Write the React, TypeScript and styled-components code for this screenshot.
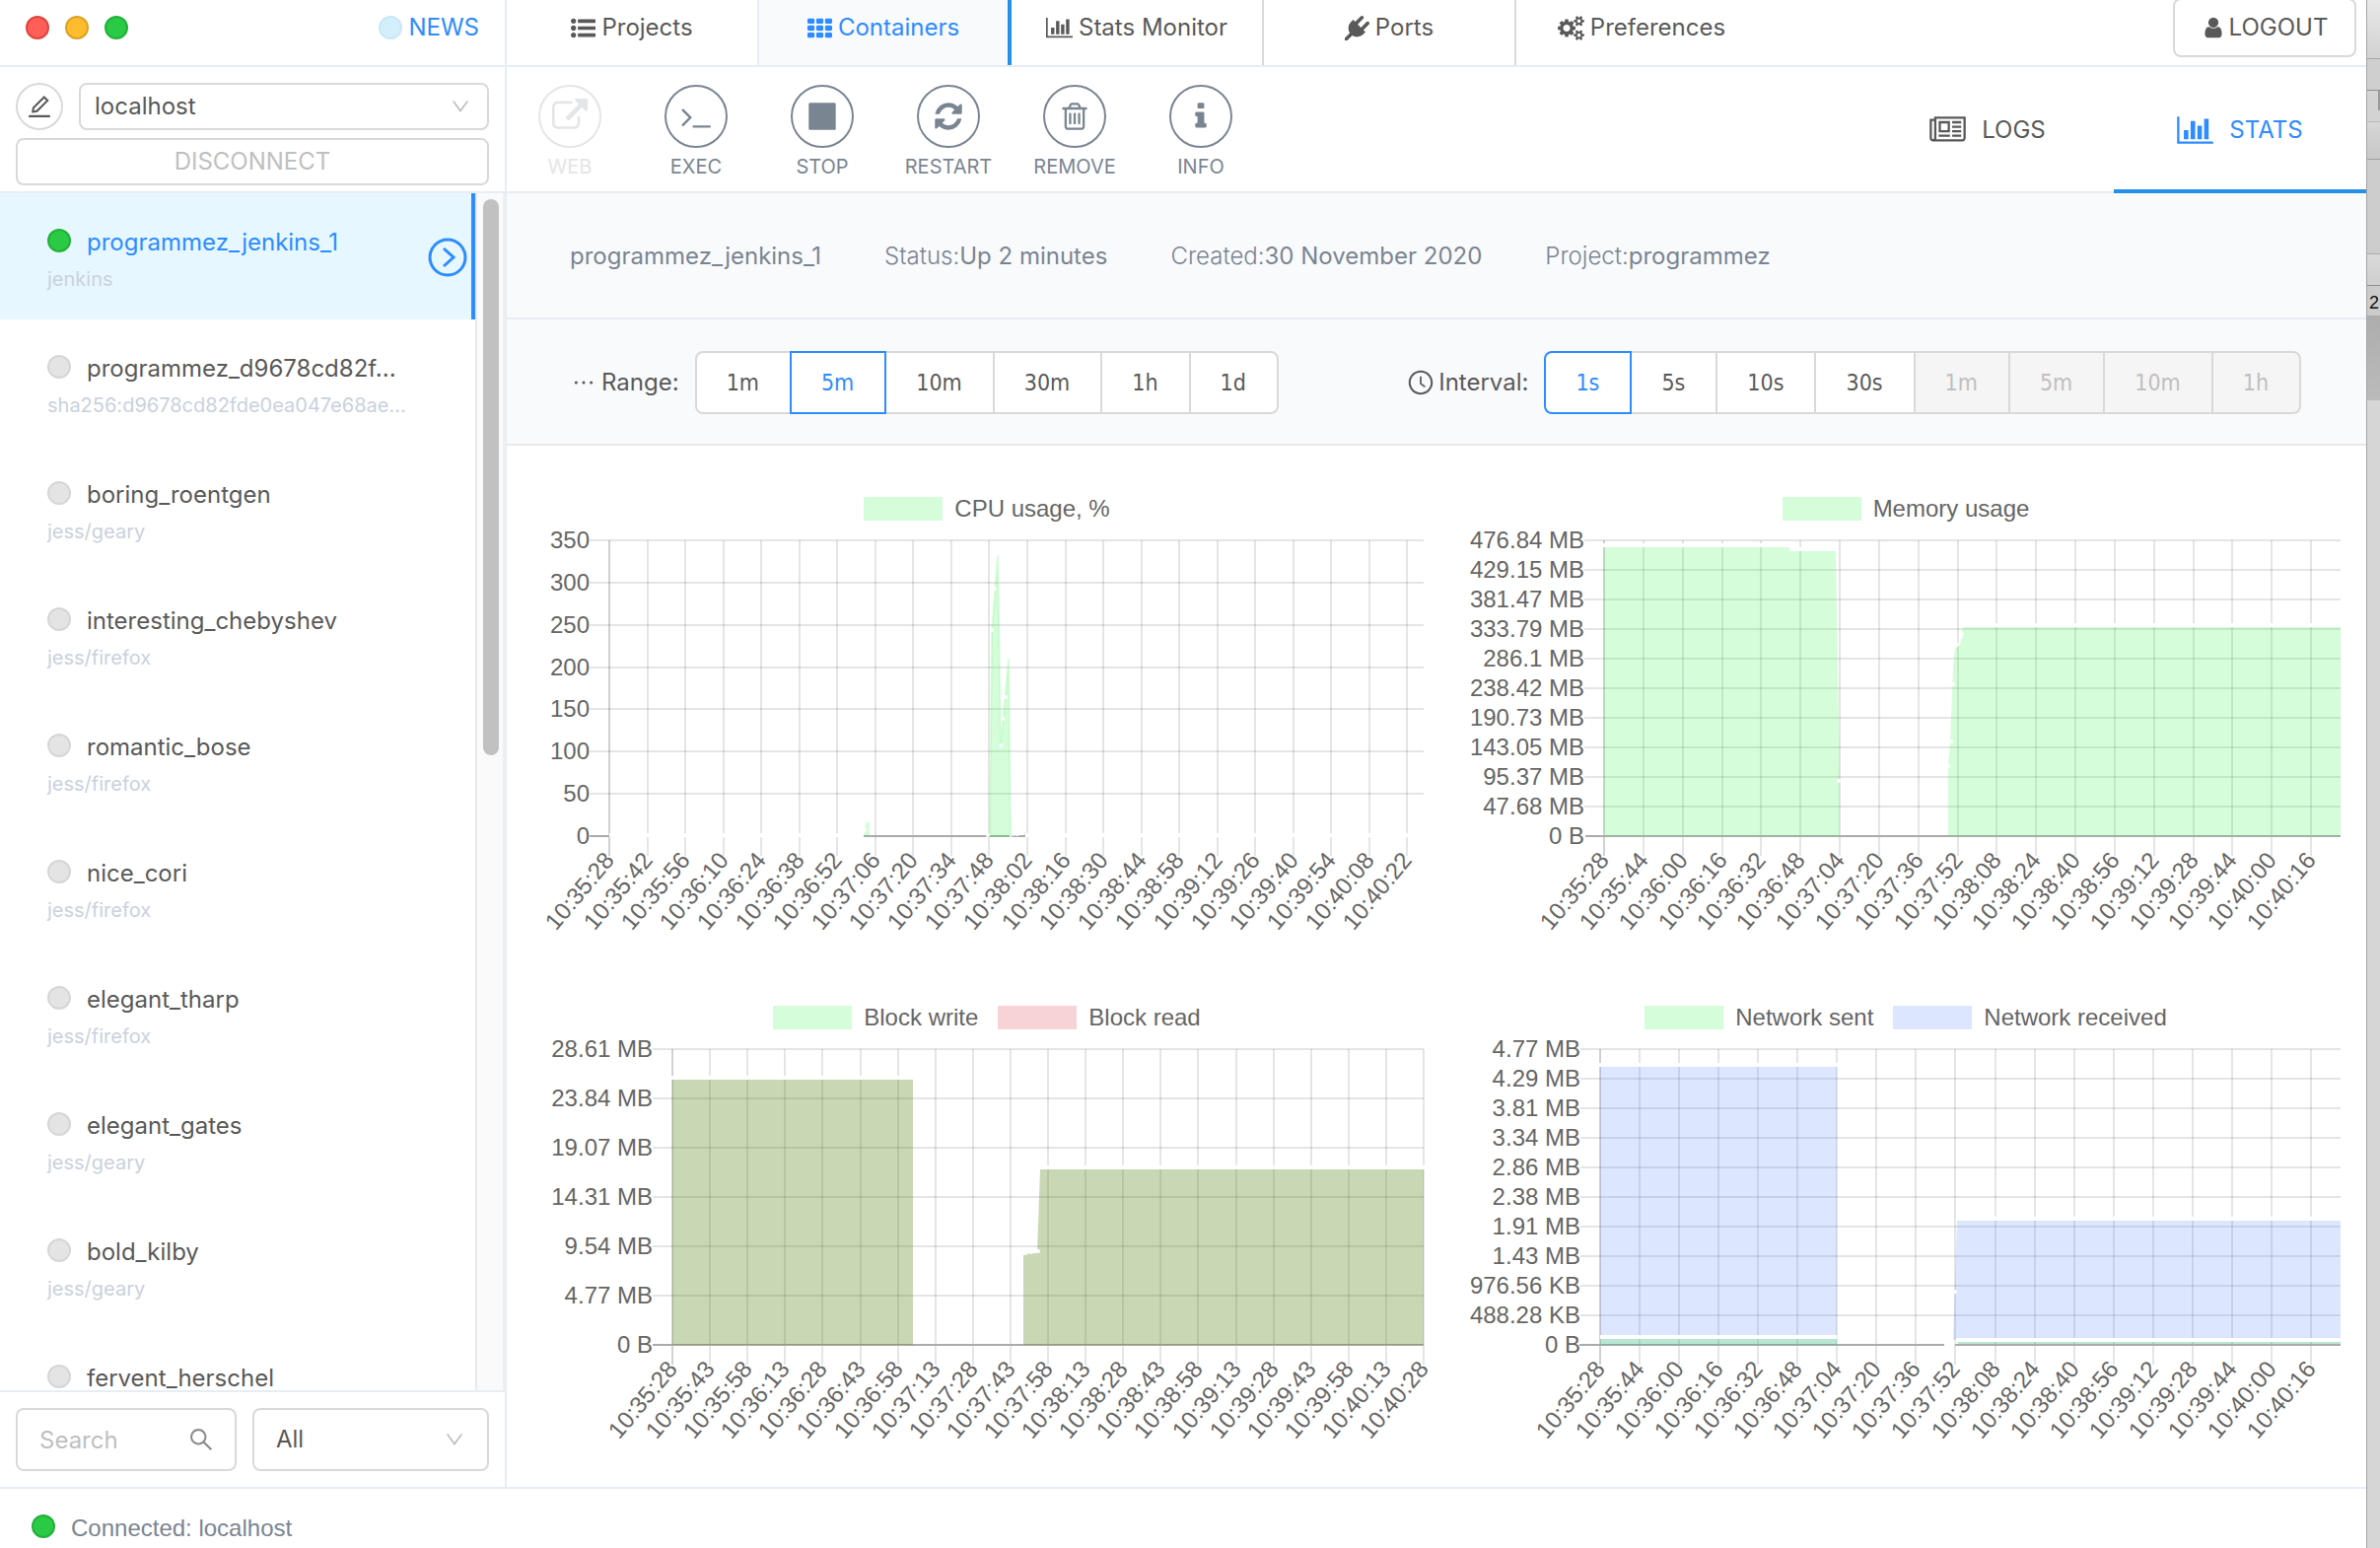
import React from "react";
import styled, { createGlobalStyle, css } from "styled-components";
import {
  AiOutlineClockCircle,
  AiOutlineDown,
  AiOutlineEdit,
  AiOutlineEllipsis,
  AiOutlineSearch,
} from "react-icons/ai";

const color = {
  text: "#595959",
  muted: "#7a8592",
  faint: "#bfbfbf",
  blue: "#2d8cff",
  bar: "#2590e8",
  line: "#e6edf5",
  border: "#d9d9d9",
  panel: "#f9fafc",
  green: "#2aca44",
};

const Global = createGlobalStyle`
  * { box-sizing: border-box; }
  html, body, #root { height: 100%; margin: 0; }
  body {
    overflow: hidden;
    background: #d6d6d6;
    color: ${color.text};
    font-family: Inter, "Liberation Sans", sans-serif;
    font-size: 24px;
    line-height: 32px;
  }
  button, input, select { font: inherit; color: inherit; margin: 0; }
  svg { display: block; flex: none; }
`;

/* ---------- icons ---------- */

type IconDef = { w: number; d: string };

const icons: Record<string, IconDef> = {
  list: {
    w: 1792,
    d: "M384 1408q0 80-56 136t-136 56-136-56-56-136 56-136 136-56 136 56 56 136zM384 896q0 80-56 136t-136 56-136-56-56-136 56-136 136-56 136 56 56 136zM1792 1312v192q0 13-9.500 22.500t-22.500 9.500h-1216q-13 0-22.500-9.500t-9.500-22.500v-192q0-13 9.500-22.500t22.500-9.500h1216q13 0 22.500 9.500t9.500 22.500zM384 384q0 80-56 136t-136 56-136-56-56-136 56-136 136-56 136 56 56 136zM1792 800v192q0 13-9.500 22.500t-22.500 9.500h-1216q-13 0-22.500-9.500t-9.500-22.500v-192q0-13 9.500-22.500t22.500-9.500h1216q13 0 22.500 9.500t9.500 22.500zM1792 288v192q0 13-9.500 22.500t-22.500 9.500h-1216q-13 0-22.500-9.500t-9.500-22.500v-192q0-13 9.500-22.500t22.500-9.500h1216q13 0 22.500 9.500t9.500 22.500z",
  },
  grid: {
    w: 1792,
    d: "M96 192h320q96 0 96 96v192q0 96-96 96h-320q-96 0-96-96v-192q0-96 96-96zM736 192h320q96 0 96 96v192q0 96-96 96h-320q-96 0-96-96v-192q0-96 96-96zM1376 192h320q96 0 96 96v192q0 96-96 96h-320q-96 0-96-96v-192q0-96 96-96zM96 704h320q96 0 96 96v192q0 96-96 96h-320q-96 0-96-96v-192q0-96 96-96zM736 704h320q96 0 96 96v192q0 96-96 96h-320q-96 0-96-96v-192q0-96 96-96zM1376 704h320q96 0 96 96v192q0 96-96 96h-320q-96 0-96-96v-192q0-96 96-96zM96 1216h320q96 0 96 96v192q0 96-96 96h-320q-96 0-96-96v-192q0-96 96-96zM736 1216h320q96 0 96 96v192q0 96-96 96h-320q-96 0-96-96v-192q0-96 96-96zM1376 1216h320q96 0 96 96v192q0 96-96 96h-320q-96 0-96-96v-192q0-96 96-96z",
  },
  chart: {
    w: 2048,
    d: "M640 896v512h-256v-512h256zM1024 384v1024h-256v-1024h256zM2048 1536v128h-2048v-1536h128v1408h1920zM1408 640v768h-256v-768h256zM1792 256v1152h-256v-1152h256z",
  },
  plug: {
    w: 1792,
    d: "M1755 453q37 38 37 90.500t-37 90.500l-401 400 150 150-160 160q-163 163-389.500 186.500t-411.500-100.500l-362 362h-181v-181l362-362q-124-185-100.500-411.500t186.500-389.500l160-160 150 150 400-401q38-37 91-37t90 37 37 90.500-37 90.500l-400 401 234 234 401-400q38-37 91-37t90 37z",
  },
  cogs: {
    w: 1920,
    d: "M896 896q0-106-75-181t-181-75-181 75-75 181 75 181 181 75 181-75 75-181zm768 512q0-52-38-90t-90-38-90 38-38 90q0 53 37.500 90.500t90.500 37.500 90.500-37.500 37.500-90.500zm0-1024q0-52-38-90t-90-38-90 38-38 90q0 53 37.500 90.500t90.500 37.500 90.500-37.500 37.500-90.500zm-384 421v185q0 10-7 19.500t-16 10.500l-155 24q-11 35-32 76 34 48 90 115 7 11 7 20 0 12-7 19-23 30-82.500 89.500t-78.500 59.500q-11 0-21-7l-115-90q-37 19-77 31-11 108-23 155-7 24-30 24h-186q-11 0-20-7.500t-10-17.500l-23-153q-34-10-75-31l-118 89q-7 7-20 7-11 0-21-8-144-133-144-160 0-9 7-19 10-14 41-53t47-61q-23-44-35-82l-152-24q-10-1-17-9.500t-7-19.500v-185q0-10 7-19.500t16-10.500l155-24q11-35 32-76-34-48-90-115-7-11-7-20 0-12 7-20 22-30 82-89t79-59q11 0 21 7l115 90q34-18 77-32 11-108 23-154 7-24 30-24h186q11 0 20 7.500t10 17.500l23 153q34 10 75 31l118-89q8-7 20-7 11 0 21 8 144 133 144 160 0 8-7 19-12 16-42 54t-45 60q23 48 34 82l152 23q10 2 17 10.500t7 19.500zm640 533v140q0 16-149 31-12 27-30 52 51 113 51 138 0 4-4 7-122 71-124 71-8 0-46-47t-52-68q-20 2-30 2t-30-2q-14 21-52 68t-46 47q-2 0-124-71-4-3-4-7 0-25 51-138-18-25-30-52-149-15-149-31v-140q0-16 149-31 13-29 30-52-51-113-51-138 0-4 4-7 4-2 35-20t59-34 30-16q8 0 46 46.500t52 67.500q20-2 30-2t30 2q51-71 92-112l6-2q4 0 124 70 4 3 4 7 0 25-51 138 17 23 30 52 149 15 149 31zm0-1024v140q0 16-149 31-12 27-30 52 51 113 51 138 0 4-4 7-122 71-124 71-8 0-46-47t-52-68q-20 2-30 2t-30-2q-14 21-52 68t-46 47q-2 0-124-71-4-3-4-7 0-25 51-138-18-25-30-52-149-15-149-31v-140q0-16 149-31 13-29 30-52-51-113-51-138 0-4 4-7 4-2 35-20t59-34 30-16q8 0 46 46.500t52 67.500q20-2 30-2t30 2q51-71 92-112l6-2q4 0 124 70 4 3 4 7 0 25-51 138 17 23 30 52 149 15 149 31z",
  },
  user: {
    w: 1792,
    d: "M1536 1399q0 109-62.500 187t-150.500 78h-854q-88 0-150.500-78t-62.500-187q0-85 8.500-160.500t31.500-152 58.500-131 94-89 134.500-34.500q131 128 313 128t313-128q76 0 134.500 34.500t94 89 58.500 131 31.500 152 8.500 160.500zm-256-887q0 159-112.500 271.500t-271.500 112.500-271.500-112.500-112.500-271.500 112.500-271.500 271.500-112.500 271.500 112.500 112.500 271.500z",
  },
  external: {
    w: 1792,
    d: "M1408 928v320q0 119-84.500 203.500t-203.500 84.500h-832q-119 0-203.500-84.500t-84.500-203.500v-832q0-119 84.500-203.500t203.500-84.500h704q14 0 23 9t9 23v64q0 14-9 23t-23 9h-704q-66 0-113 47t-47 113v832q0 66 47 113t113 47h832q66 0 113-47t47-113v-320q0-14 9-23t23-9h64q14 0 23 9t9 23zm384-864v512q0 26-19 45t-45 19-45-19l-176-176-652 652q-10 10-23 10t-23-10l-114-114q-10-10-10-23t10-23l652-652-176-176q-19-19-19-45t19-45 45-19h512q26 0 45 19t19 45z",
  },
  terminal: {
    w: 1792,
    d: "M649 983l-466 466q-10 10-23 10t-23-10l-50-50q-10-10-10-23t10-23l393-393-393-393q-10-10-10-23t10-23l50-50q10-10 23-10t23 10l466 466q10 10 10 23t-10 23zm1079 457v64q0 14-9 23t-23 9h-960q-14 0-23-9t-9-23v-64q0-14 9-23t23-9h960q14 0 23 9t9 23z",
  },
  stop: {
    w: 1792,
    d: "M1664 192v1408q0 26-19 45t-45 19h-1408q-26 0-45-19t-19-45v-1408q0-26 19-45t45-19h1408q26 0 45 19t19 45z",
  },
  refresh: {
    w: 1792,
    d: "M1639 1056q0 5-1 7-64 268-268 434.500t-478 166.500q-146 0-282.500-55t-243.500-157l-129 129q-19 19-45 19t-45-19-19-45v-448q0-26 19-45t45-19h448q26 0 45 19t19 45-19 45l-137 137q71 66 161 102t187 36q134 0 250-65t186-179q11-17 53-117 8-23 30-23h192q13 0 22.500 9.500t9.500 22.500zm25-800v448q0 26-19 45t-45 19h-448q-26 0-45-19t-19-45 19-45l138-138q-148-137-349-137-134 0-250 65t-186 179q-11 17-53 117-8 23-30 23h-199q-13 0-22.500-9.500t-9.500-22.500v-7q65-268 270-434.500t480-166.500q146 0 284 55.500t245 156.500l130-129q19-19 45-19t45 19 19 45z",
  },
  trash: {
    w: 1792,
    d: "M704 736v576q0 14-9 23t-23 9h-64q-14 0-23-9t-9-23v-576q0-14 9-23t23-9h64q14 0 23 9t9 23zm256 0v576q0 14-9 23t-23 9h-64q-14 0-23-9t-9-23v-576q0-14 9-23t23-9h64q14 0 23 9t9 23zm256 0v576q0 14-9 23t-23 9h-64q-14 0-23-9t-9-23v-576q0-14 9-23t23-9h64q14 0 23 9t9 23zm128 724v-948h-896v948q0 22 7 40.500t14.500 27 10.500 8.500h832q3 0 10.500-8.500t14.500-27 7-40.500zm-672-1076h448l-48-117q-7-9-17-11h-317q-10 2-17 11zm928 32v64q0 14-9 23t-23 9h-96v948q0 83-47 143.500t-113 60.500h-832q-66 0-113-58.500t-47-141.500v-952h-96q-14 0-23-9t-9-23v-64q0-14 9-23t23-9h309l70-167q15-37 54-63t79-26h320q40 0 79 26t54 63l70 167h309q14 0 23 9t9 23z",
  },
  info: {
    w: 1792,
    d: "M1216 1344v128q0 26-19 45t-45 19h-512q-26 0-45-19t-19-45v-128q0-26 19-45t45-19h64v-384h-64q-26 0-45-19t-19-45v-128q0-26 19-45t45-19h384q26 0 45 19t19 45v576h64q26 0 45 19t19 45zm-128-1152v192q0 26-19 45t-45 19h-256q-26 0-45-19t-19-45v-192q0-26 19-45t45-19h256q26 0 45 19t19 45z",
  },
  news: {
    w: 2048,
    d: "M1024 512h-384v384h384v-384zm128 640v128h-640v-128h640zm0-768v640h-640v-640h640zm640 768v128h-512v-128h512zm0-256v128h-512v-128h512zm0-256v128h-512v-128h512zm0-256v128h-512v-128h512zm-1536 960v-960h-128v960q0 26 19 45t45 19 45-19 19-45zm1664 0v-1088h-1536v1088q0 33-11 64h1483q26 0 45-19t19-45zm128-1216v1216q0 80-56 136t-136 56h-1664q-80 0-136-56t-56-136v-1088h256v-128h1792z",
  },
};

function Icon({ name, size }: { name: keyof typeof icons; size: number }) {
  const { w, d } = icons[name];
  return (
    <svg
      height={size}
      width={Math.round((size * w) / 1792)}
      viewBox={`0 0 ${w} 1792`}
      fill="currentColor"
      aria-hidden="true"
    >
      <path d={d} />
    </svg>
  );
}

function OpenIcon() {
  return (
    <svg width="40" height="40" viewBox="0 0 40 40" fill="none" stroke="currentColor" strokeWidth="3" aria-hidden="true">
      <circle cx="20" cy="20" r="18" />
      <path d="M16 11L26 20L16 29" />
    </svg>
  );
}

/* ---------- frame ---------- */

const Screen = styled.div`
  display: grid;
  grid-template-columns: minmax(0, 1fr) 14px;
  height: 100%;
  min-height: 1100px;
`;

const AppWindow = styled.div`
  display: flex;
  flex-direction: column;
  min-width: 0;
  min-height: 0;
  background: #fff;
`;

const Columns = styled.div`
  flex: 1;
  display: grid;
  grid-template-columns: 514px minmax(0, 1fr);
  min-height: 0;
`;

const Behind = styled.div`
  display: flex;
  flex-direction: column;
  border-left: 1px solid #a5a5a5;
  background: #d6d6d6;
  overflow: hidden;
`;

const Strip = styled.div<{ $h: number; $bg: string; $line?: string; $side?: boolean }>`
  flex: none;
  height: ${(p) => p.$h}px;
  background: ${(p) => p.$bg};
  border-bottom: ${(p) => (p.$line ? `1px solid ${p.$line}` : "0")};
  border-right: ${(p) => (p.$side ? "2px solid #999" : "0")};
  padding-left: 2px;
  font: 18px/34px "Liberation Sans", sans-serif;
  color: #111;
`;

/* ---------- sidebar ---------- */

const Sidebar = styled.aside`
  display: flex;
  flex-direction: column;
  min-height: 0;
  border-right: 2px solid ${color.line};
`;

const TitleBar = styled.div`
  flex: none;
  display: flex;
  align-items: center;
  justify-content: space-between;
  height: 68px;
  padding: 0 26px 10px;
  border-bottom: 2px solid ${color.line};
`;

const Lights = styled.div`
  display: flex;
  gap: 16px;
`;

const Dot = styled.span<{ $fill: string; $edge: string }>`
  flex: none;
  width: 24px;
  height: 24px;
  border-radius: 50%;
  background: ${(p) => p.$fill};
  border: 2px solid ${(p) => p.$edge};
`;

const LightButton = styled.button<{ $fill: string; $edge: string }>`
  width: 24px;
  height: 24px;
  padding: 0;
  border-radius: 50%;
  background: ${(p) => p.$fill};
  border: 2px solid ${(p) => p.$edge};
`;

const NewsLink = styled.a`
  display: flex;
  align-items: center;
  gap: 6px;
  color: ${color.blue};
  text-decoration: none;
`;

const Connection = styled.div`
  flex: none;
  display: grid;
  grid-template-columns: 48px minmax(0, 1fr);
  gap: 8px 16px;
  height: 128px;
  padding: 16px 16px 6px;
  border-bottom: 2px solid ${color.line};
`;

const RoundButton = styled.button`
  display: grid;
  place-items: center;
  width: 48px;
  height: 48px;
  padding: 0;
  border: 2px solid ${color.border};
  border-radius: 50%;
  background: #fff;
`;

const WideButton = styled.button`
  grid-column: 1 / -1;
  height: 48px;
  border: 2px solid ${color.border};
  border-radius: 8px;
  background: #fff;
  color: ${color.faint};
`;

const Field = styled.label<{ $h: number; $edge: number }>`
  position: relative;
  display: block;
  height: ${(p) => p.$h}px;
  min-width: 0;

  select, input {
    appearance: none;
    width: 100%;
    height: 100%;
    padding: 0 ${(p) => p.$edge}px;
    border: 2px solid ${color.border};
    border-radius: 8px;
    background: #fff;
    outline: 0;
  }
  input::placeholder { color: ${color.faint}; opacity: 1; }
`;

const FieldIcon = styled.span<{ $tone: string; $right: number }>`
  position: absolute;
  right: ${(p) => p.$right}px;
  top: 50%;
  transform: translateY(-50%);
  color: ${(p) => p.$tone};
  pointer-events: none;
`;

const ListArea = styled.div`
  flex: 1;
  display: grid;
  grid-template-columns: minmax(0, 1fr) 30px;
  min-height: 0;
`;

const List = styled.ul`
  margin: 0;
  padding: 0;
  list-style: none;
  overflow: hidden;
`;

const Item = styled.li<{ $active: boolean }>`
  display: flex;
  align-items: flex-start;
  height: 128px;
  padding-top: 36px;
  ${(p) =>
    p.$active &&
    css`
      background: #e6f7ff;
      border-right: 4px solid ${color.blue};
      color: ${color.blue};
    `}
`;

const ItemText = styled.div`
  flex: 1;
  min-width: 0;
  padding-left: 48px;
`;

const ItemName = styled.div`
  display: flex;
  align-items: flex-start;
  gap: 16px;
  line-height: 28px;
  white-space: nowrap;
`;

const ItemImage = styled.div`
  padding-top: 8px;
  font-size: 20px;
  line-height: 30px;
  color: #c9d1de;
  white-space: nowrap;
`;

const OpenButton = styled.button`
  padding: 0;
  margin: 9px 4px 0 0;
  border: 0;
  background: none;
  color: ${color.blue};
`;

const Track = styled.div`
  padding: 6px 4px 0 6px;
  border-left: 2px solid #e8e8e8;
  border-right: 2px solid #efefef;
  background: #fafafa;
`;

const Thumb = styled.div`
  width: 16px;
  height: 46.7%;
  border-radius: 8px;
  background: #c1c1c1;
`;

const Filters = styled.div`
  flex: none;
  display: grid;
  grid-template-columns: 224px minmax(0, 1fr);
  gap: 16px;
  padding: 16px;
  border-top: 2px solid ${color.line};
`;

const StatusBar = styled.footer`
  flex: none;
  display: flex;
  align-items: flex-start;
  gap: 16px;
  height: 62px;
  padding: 26px 32px 0;
  border-top: 2px solid ${color.line};
  color: ${color.muted};
  font-family: "Liberation Sans", sans-serif;
  line-height: 28px;
`;

/* ---------- main column ---------- */

const Main = styled.main`
  display: flex;
  flex-direction: column;
  min-width: 0;
`;

const TopNav = styled.nav`
  flex: none;
  display: flex;
  height: 68px;
  border-bottom: 2px solid ${color.line};
`;

const NavTab = styled.a<{ $active?: boolean; $edge: string }>`
  display: flex;
  align-items: center;
  justify-content: center;
  gap: 6px;
  width: 256px;
  padding-bottom: 10px;
  border-right: ${(p) => (p.$active ? 4 : 2)}px solid ${(p) => p.$edge};
  background: ${(p) => (p.$active ? color.panel : "#fff")};
  color: ${(p) => (p.$active ? color.blue : color.text)};
  text-decoration: none;
`;

const Logout = styled.button`
  display: flex;
  align-items: center;
  justify-content: center;
  gap: 4px;
  width: 186px;
  height: 60px;
  margin: -2px 10px 0 auto;
  border: 2px solid ${color.border};
  border-radius: 8px;
  background: #fff;
`;

const Toolbar = styled.div`
  flex: none;
  display: flex;
  height: 128px;
  border-bottom: 2px solid ${color.line};
`;

const Action = styled.button`
  display: flex;
  flex-direction: column;
  align-items: center;
  width: 128px;
  padding: 18px 0 0;
  border: 0;
  background: none;
  color: ${color.muted};
  font-size: 20px;
  line-height: 38px;
  &:disabled { color: #e4e5e7; }
`;

const Ring = styled.span`
  display: grid;
  place-items: center;
  width: 64px;
  height: 64px;
  border: 2px solid currentColor;
  border-radius: 50%;
`;

const Views = styled.div`
  display: flex;
  margin-left: auto;
`;

const ViewTab = styled.button<{ $active?: boolean }>`
  display: flex;
  align-items: center;
  justify-content: center;
  gap: 16px;
  width: 256px;
  height: 128px;
  padding: 4px 0 0;
  border: 0;
  border-bottom: 4px solid ${(p) => (p.$active ? color.bar : "transparent")};
  background: none;
  color: ${(p) => (p.$active ? color.blue : color.text)};
`;

const Details = styled.dl`
  flex: none;
  display: flex;
  align-items: center;
  gap: 64px;
  height: 128px;
  margin: 0;
  padding: 2px 64px 0;
  border-bottom: 2px solid ${color.line};
  background: ${color.panel};
  color: ${color.muted};

  div { display: flex; }
  dt { font-weight: 300; }
  dd { margin: 0; }
`;

const Controls = styled.div`
  flex: none;
  display: flex;
  align-items: center;
  justify-content: space-between;
  height: 128px;
  padding: 2px 66px 0 64px;
  border-bottom: 2px solid #e8e8e8;
  background: ${color.panel};
`;

const Choice = styled.fieldset`
  display: flex;
  align-items: center;
  margin: 0;
  padding: 0;
  border: 0;
`;

const ChoiceLabel = styled.span`
  display: flex;
  align-items: center;
  gap: 4px;
  margin-right: 16px;
`;

const Segment = styled.label<{ $active: boolean; $off: boolean }>`
  position: relative;
  display: flex;
  align-items: center;
  height: 64px;
  padding: 0 31px 0 30px;
  margin-left: -2px;
  border: 2px solid ${color.border};
  background: ${(p) => (p.$off ? "#f5f5f5" : "#fff")};
  color: ${(p) => (p.$off ? color.faint : color.text)};
  font-family: "DejaVu Sans Condensed", "Noto Sans", sans-serif;
  font-size: 23px;
  &:first-of-type { margin-left: 0; border-radius: 8px 0 0 8px; }
  &:last-of-type { border-radius: 0 8px 8px 0; }
  ${(p) =>
    p.$active &&
    css`
      z-index: 1;
      border-color: ${color.blue};
      color: ${color.blue};
    `}
  input { position: absolute; opacity: 0; }
`;

/* ---------- charts ---------- */

const Charts = styled.section`
  display: grid;
  grid-template-columns: 1fr 1fr;
  gap: 60px 46px;
  padding: 52px 24px 0 44px;
`;

const Figure = styled.figure`
  min-width: 0;
  margin: 0;
  color: #666;
  font-family: "Liberation Sans", sans-serif;
`;

const Legend = styled.figcaption`
  display: flex;
  justify-content: center;
  gap: 20px;
  margin-bottom: 12px;
  line-height: 24px;
`;

const Key = styled.span<{ $fill: string }>`
  display: flex;
  gap: 12px;
  &::before {
    content: "";
    width: 80px;
    height: 24px;
    background: ${(p) => p.$fill};
  }
`;

const Plot = styled.svg`
  width: 100%;
  height: auto;
  overflow: visible;
  text { fill: #666; font-size: 24px; }
`;

const GREEN = "rgba(45,245,70,0.2)";
const RED = "rgba(215,35,45,0.2)";
const BLUE = "rgba(80,130,255,0.2)";
const OLIVE = "rgba(75,125,5,0.3)";
const TEAL = "rgba(20,180,110,0.3)";

type ChartProps = {
  legend: [string, string][];
  yLabels: string[];
  left: number;
  right: number;
  step: number;
  base: [number, number][];
  children: React.ReactNode;
};

const TOP = 8;
const BOTTOM = 308;
const SPAN = 300;

function clock(seconds: number) {
  const t = 10 * 3600 + 35 * 60 + 28 + seconds;
  return [Math.floor(t / 3600), Math.floor(t / 60) % 60, t % 60]
    .map((n) => String(n).padStart(2, "0"))
    .join(":");
}

function Chart({ legend, yLabels, left, right, step, base, children }: ChartProps) {
  const times = Array.from({ length: Math.floor(SPAN / step) + 1 }, (_, i) => i * step);
  const rowH = (BOTTOM - TOP) / (yLabels.length - 1);
  return (
    <Figure>
      <Legend>
        {legend.map(([label, fill]) => (
          <Key key={label} $fill={fill}>
            {label}
          </Key>
        ))}
      </Legend>
      <Plot viewBox="0 0 886 420" role="img" aria-label={legend.map((l) => l[0]).join(", ")}>
        {yLabels.map((label, i) => {
          const y = Math.round(TOP + i * rowH);
          return (
            <g key={label}>
              {i < yLabels.length - 1 && (
                <line x1={left - 20} x2={right} y1={y} y2={y} stroke="rgba(0,0,0,0.1)" strokeWidth="2" />
              )}
              <text x={left - 20} y={y + 8} textAnchor="end">
                {label}
              </text>
            </g>
          );
        })}
        {times.map((s) => {
          const x = Math.round(left + ((right - left) * s) / SPAN);
          return (
            <g key={s}>
              <line
                x1={x}
                x2={x}
                y1={TOP}
                y2={BOTTOM + 20}
                stroke={s === 0 ? "rgba(0,0,0,0.18)" : "rgba(0,0,0,0.1)"}
                strokeWidth="2"
              />
              <text transform={`translate(${x} ${BOTTOM + 20}) rotate(-50)`} y="8" textAnchor="end">
                {clock(s)}
              </text>
            </g>
          );
        })}
        {base.map(([a, b]) => (
          <line key={a} x1={a} x2={b} y1={BOTTOM} y2={BOTTOM} stroke="#ababab" strokeWidth="2" />
        ))}
        {children}
      </Plot>
    </Figure>
  );
}

function Gap({ x1, x2, y }: { x1: number; x2: number; y: number }) {
  return <line x1={x1} x2={x2} y1={y} y2={y} stroke="#fff" strokeWidth="4" />;
}

function Points({ at }: { at: [number, number][] }) {
  return (
    <>
      {at.map(([x, y]) => (
        <circle key={`${x}-${y}`} cx={x} cy={y} r="2" fill="#fff" />
      ))}
    </>
  );
}

/* ---------- data ---------- */

const containers: { name: string; image?: string }[] = [
  { name: "programmez_jenkins_1", image: "jenkins" },
  { name: "programmez_d9678cd82f...", image: "sha256:d9678cd82fde0ea047e68ae..." },
  { name: "boring_roentgen", image: "jess/geary" },
  { name: "interesting_chebyshev", image: "jess/firefox" },
  { name: "romantic_bose", image: "jess/firefox" },
  { name: "nice_cori", image: "jess/firefox" },
  { name: "elegant_tharp", image: "jess/firefox" },
  { name: "elegant_gates", image: "jess/geary" },
  { name: "bold_kilby", image: "jess/geary" },
  { name: "fervent_herschel" },
];

const actions = [
  ["WEB", "external", 36],
  ["EXEC", "terminal", 32],
  ["STOP", "stop", 32],
  ["RESTART", "refresh", 32],
  ["REMOVE", "trash", 32],
  ["INFO", "info", 32],
] as const;

function Choices(props: {
  name: string;
  icon: React.ReactNode;
  options: string[];
  value: string;
  disabledFrom?: number;
}) {
  const { name, icon, options, value, disabledFrom = options.length } = props;
  return (
    <Choice aria-label={name}>
      <ChoiceLabel>
        {icon}
        {name}:
      </ChoiceLabel>
      {options.map((o, i) => (
        <Segment key={o} $active={o === value} $off={i >= disabledFrom}>
          <input type="radio" name={name} defaultChecked={o === value} disabled={i >= disabledFrom} />
          {o}
        </Segment>
      ))}
    </Choice>
  );
}

export default function App() {
  return (
    <>
      <Global />
      <Screen>
        <AppWindow>
          <Columns>
            <Sidebar>
              <TitleBar>
                <Lights>
                  <LightButton aria-label="Close" $fill="#ff5f57" $edge="#e0443e" />
                  <LightButton aria-label="Minimize" $fill="#ffbd2e" $edge="#dea123" />
                  <LightButton aria-label="Zoom" $fill={color.green} $edge="#22b03a" />
                </Lights>
                <NewsLink href="#news">
                  <Dot $fill="#d3effb" $edge="#c9e8f8" />
                  NEWS
                </NewsLink>
              </TitleBar>
              <Connection>
                <RoundButton aria-label="Edit connection">
                  <AiOutlineEdit size={28} />
                </RoundButton>
                <Field $h={48} $edge={14}>
                  <select aria-label="Connection" defaultValue="localhost">
                    <option>localhost</option>
                  </select>
                  <FieldIcon $tone={color.faint} $right={18}>
                    <AiOutlineDown size={22} />
                  </FieldIcon>
                </Field>
                <WideButton>DISCONNECT</WideButton>
              </Connection>
              <ListArea>
                <List>
                  {containers.map(({ name, image }, i) => (
                    <Item key={name} $active={i === 0}>
                      <ItemText>
                        <ItemName>
                          <Dot
                            $fill={i === 0 ? color.green : "#e4e4e4"}
                            $edge={i === 0 ? "#22b03a" : "#d6d6d6"}
                          />
                          {name}
                        </ItemName>
                        {image && <ItemImage>{image}</ItemImage>}
                      </ItemText>
                      {i === 0 && (
                        <OpenButton aria-label="Open container">
                          <OpenIcon />
                        </OpenButton>
                      )}
                    </Item>
                  ))}
                </List>
                <Track>
                  <Thumb />
                </Track>
              </ListArea>
              <Filters>
                <Field $h={64} $edge={22}>
                  <input type="text" aria-label="Search" placeholder="Search" />
                  <FieldIcon $tone="#8c8c8c" $right={22}>
                    <AiOutlineSearch size={28} />
                  </FieldIcon>
                </Field>
                <Field $h={64} $edge={22}>
                  <select aria-label="State" defaultValue="All">
                    <option>All</option>
                  </select>
                  <FieldIcon $tone={color.faint} $right={24}>
                    <AiOutlineDown size={22} />
                  </FieldIcon>
                </Field>
              </Filters>
            </Sidebar>

            <Main>
              <TopNav>
                <NavTab href="#projects" $edge={color.line}>
                  <Icon name="list" size={25} />
                  Projects
                </NavTab>
                <NavTab href="#containers" $active $edge={color.bar}>
                  <Icon name="grid" size={25} />
                  Containers
                </NavTab>
                <NavTab href="#stats" $edge={color.border}>
                  <Icon name="chart" size={24} />
                  Stats Monitor
                </NavTab>
                <NavTab href="#ports" $edge={color.border}>
                  <Icon name="plug" size={25} />
                  Ports
                </NavTab>
                <NavTab href="#preferences" $edge="transparent">
                  <Icon name="cogs" size={25} />
                  Preferences
                </NavTab>
                <Logout>
                  <Icon name="user" size={24} />
                  LOGOUT
                </Logout>
              </TopNav>

              <Toolbar>
                {actions.map(([label, icon, size], i) => (
                  <Action key={label} disabled={i === 0}>
                    <Ring>
                      <Icon name={icon} size={size} />
                    </Ring>
                    {label}
                  </Action>
                ))}
                <Views>
                  <ViewTab>
                    <Icon name="news" size={32} />
                    LOGS
                  </ViewTab>
                  <ViewTab $active>
                    <Icon name="chart" size={32} />
                    STATS
                  </ViewTab>
                </Views>
              </Toolbar>

              <Details>
                <div>
                  <dd>programmez_jenkins_1</dd>
                </div>
                <div>
                  <dt>Status:</dt>
                  <dd>Up 2 minutes</dd>
                </div>
                <div>
                  <dt>Created:</dt>
                  <dd>30 November 2020</dd>
                </div>
                <div>
                  <dt>Project:</dt>
                  <dd>programmez</dd>
                </div>
              </Details>

              <Controls>
                <Choices
                  name="Range"
                  icon={<AiOutlineEllipsis size={28} />}
                  options={["1m", "5m", "10m", "30m", "1h", "1d"]}
                  value="5m"
                />
                <Choices
                  name="Interval"
                  icon={<AiOutlineClockCircle size={28} />}
                  options={["1s", "5s", "10s", "30s", "1m", "5m", "10m", "1h"]}
                  value="1s"
                  disabledFrom={4}
                />
              </Controls>

              <Charts>
                <Chart
                  legend={[["CPU usage, %", GREEN]]}
                  yLabels={["350", "300", "250", "200", "150", "100", "50", "0"]}
                  left={60}
                  right={886}
                  step={14}
                  base={[[40, 60], [318, 466], [468, 482]]}
                >
                  <Gap x1={60} x2={318} y={307} />
                  <Gap x1={482} x2={888} y={307} />
                  <path d="M318 308L320 294H324V308Z" fill={GREEN} />
                  <path
                    d="M446 308L448 99L454 23L457 215L465 128L467 308Z"
                    fill={GREEN}
                    stroke="rgba(45,245,70,0.15)"
                    strokeWidth="2"
                  />
                  <path d="M480 306L482 303V308Z" fill={GREEN} />
                  <Points at={[[319, 302], [448, 99], [451, 57], [457, 216], [459, 189], [462, 167], [444, 307], [470, 306], [474, 306]]} />
                </Chart>

                <Chart
                  legend={[["Memory usage", GREEN]]}
                  yLabels={["476.84 MB", "429.15 MB", "381.47 MB", "333.79 MB", "286.1 MB", "238.42 MB", "190.73 MB", "143.05 MB", "95.37 MB", "47.68 MB", "0 B"]}
                  left={137}
                  right={884}
                  step={16}
                  base={[[118, 884]]}
                >
                  <Gap x1={135} x2={325} y={13} />
                  <Gap x1={325} x2={374} y={17} />
                  <Gap x1={500} x2={886} y={94} />
                  <path d="M137 308V15H325V19H372L376 252V308Z" fill={GREEN} />
                  <path d="M486 308V236L488 214L491 137L493 117L498 114L501 96H884V308Z" fill={GREEN} />
                  <Points at={[[375, 252], [486, 237], [489, 212], [491, 154], [495, 114], [499, 106], [500, 103]]} />
                </Chart>

                <Chart
                  legend={[["Block write", GREEN], ["Block read", RED]]}
                  yLabels={["28.61 MB", "23.84 MB", "19.07 MB", "14.31 MB", "9.54 MB", "4.77 MB", "0 B"]}
                  left={124}
                  right={886}
                  step={15}
                  base={[[104, 886]]}
                >
                  <Gap x1={122} x2={370} y={37} />
                  <Gap x1={497} x2={888} y={128} />
                  <path d="M124 308V39H368V308Z" fill={OLIVE} />
                  <path d="M480 308V217L487 215H494L497 130H886V308Z" fill={OLIVE} />
                  <Points at={[[482, 215], [488, 214], [495, 213]]} />
                </Chart>

                <Chart
                  legend={[["Network sent", GREEN], ["Network received", BLUE]]}
                  yLabels={["4.77 MB", "4.29 MB", "3.81 MB", "3.34 MB", "2.86 MB", "2.38 MB", "1.91 MB", "1.43 MB", "976.56 KB", "488.28 KB", "0 B"]}
                  left={133}
                  right={884}
                  step={16}
                  base={[[112, 482], [493, 884]]}
                >
                  <Gap x1={131} x2={375} y={24} />
                  <Gap x1={494} x2={886} y={180} />
                  <path d="M133 298V26H373V298Z" fill={BLUE} />
                  <path d="M491 304L495 182H884V302H494Z" fill={BLUE} />
                  <Gap x1={133} x2={373} y={300} />
                  <Gap x1={494} x2={884} y={303} />
                  <path d="M133 302H373V308H133Z" fill={TEAL} />
                  <path d="M496 305H884V307H496Z" fill={TEAL} />
                  <Points at={[[493, 254], [491, 305], [484, 307]]} />
                </Chart>
              </Charts>
            </Main>
          </Columns>
          <StatusBar>
            <Dot $fill={color.green} $edge="#22b03a" />
            Connected: localhost
          </StatusBar>
        </AppWindow>
        <Behind aria-hidden="true">
          <Strip $h={60} $bg="linear-gradient(#e8e8e8,#d2d2d2)" $line="#a8a8a8" />
          <Strip $h={32} $bg="#cfcfcf" $line="#8e8e8e" />
          <Strip $h={20} $bg="#d3d3d3" $side />
          <Strip $h={12} $bg="#d3d3d3" $line="#bcbcbc" />
          <Strip $h={38} $bg="linear-gradient(#d6d6d6,#c8c8c8)" $line="#a0a0a0" />
          <Strip $h={96} $bg="#cdcdcd" $line="#aaaaaa" />
          <Strip $h={32} $bg="linear-gradient(#dadada,#cfcfcf)" $line="#8e8e8e" />
          <Strip $h={30} $bg="#cbcbcb">2</Strip>
          <Strip $h={86} $bg="linear-gradient(#adadad,#bbbbbb)" />
        </Behind>
      </Screen>
    </>
  );
}
